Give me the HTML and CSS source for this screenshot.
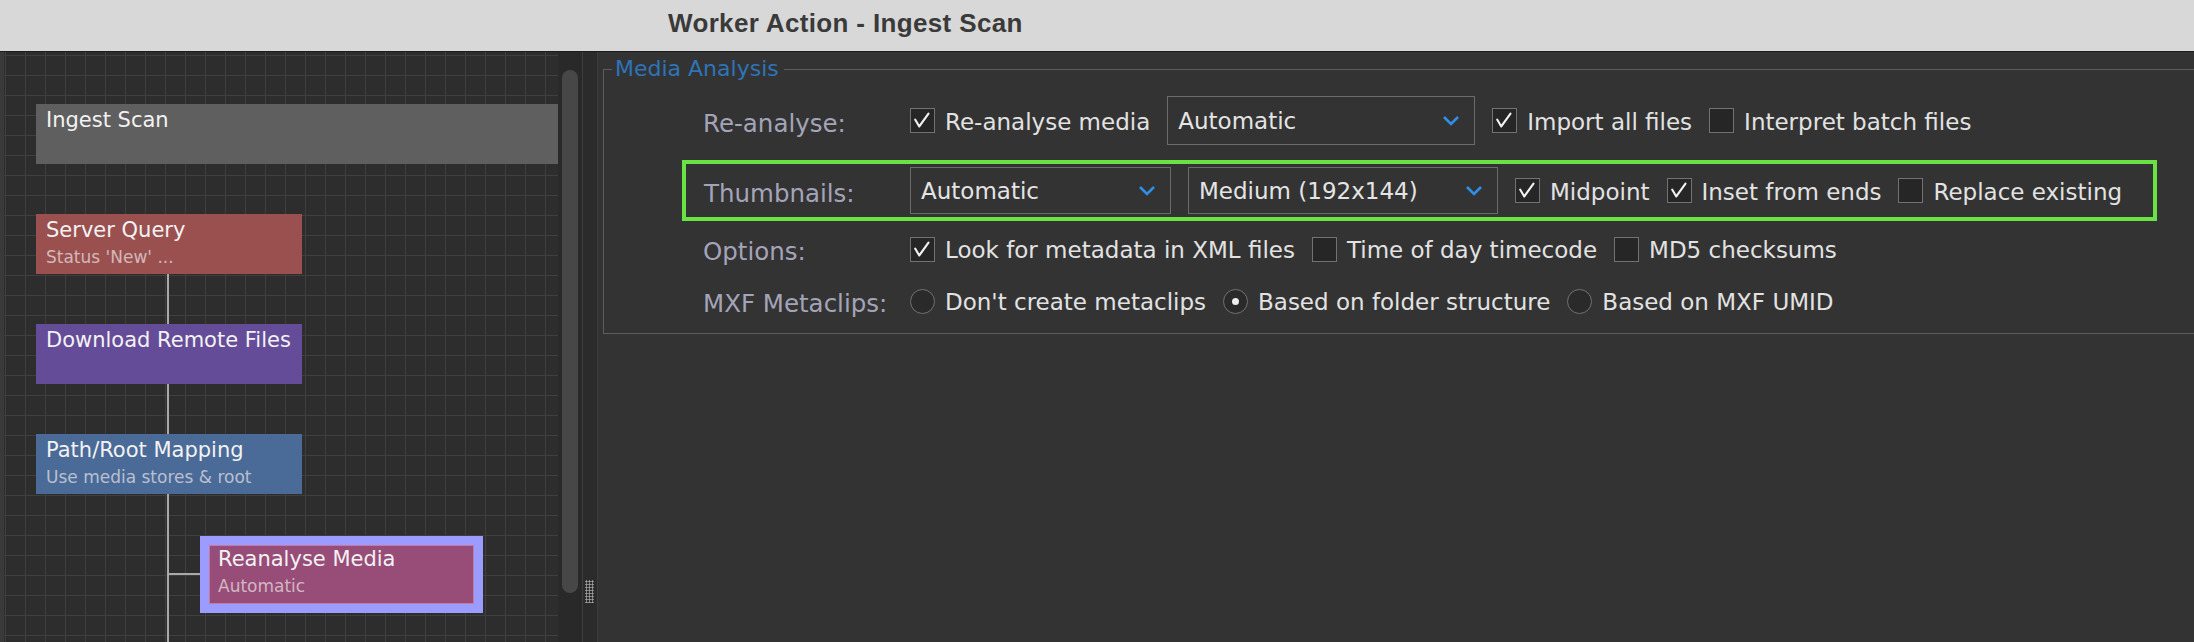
FILE: index.html
```html
<!DOCTYPE html>
<html lang="en">
<head>
  <meta charset="UTF-8">
  <title>Worker Action - Ingest Scan</title>
  <link rel="stylesheet" href="styles.css">
</head>
<body>
<div class="titlebar">Worker Action - Ingest Scan</div>

<div class="main">
  <!-- Workflow graph -->
  <div class="canvas">
    <div class="wire wire-v"></div>
    <div class="wire wire-h"></div>

    <div class="node n-ingest">Ingest Scan</div>
    <div class="node n-query">Server Query<div class="sub">Status 'New' ...</div></div>
    <div class="node n-download">Download Remote Files</div>
    <div class="node n-path">Path/Root Mapping<div class="sub">Use media stores &amp; root</div></div>
    <div class="selected">
      <div class="node-inner">Reanalyse Media<div class="sub">Automatic</div></div>
    </div>
  </div>

  <div class="scrollbar"><div class="thumb"></div></div>
  <div class="splitter"><div class="grip"></div></div>

  <!-- Settings -->
  <div class="panel">
    <fieldset class="group">
      <legend>Media Analysis</legend>

      <div class="row row-1">
        <span class="label">Re-analyse:</span>
        <span class="check"><span class="box"><svg width="25" height="25" viewBox="0 0 25 25"><path d="M4.5 11.5 L9 19 L19 5" /></svg></span><span>Re-analyse media</span></span>
        <div class="select w308"><span>Automatic</span><svg width="18" height="11" viewBox="0 0 18 11"><polyline points="2,2 9,9 16,2" /></svg></div>
        <span class="check"><span class="box"><svg width="25" height="25" viewBox="0 0 25 25"><path d="M4.5 11.5 L9 19 L19 5" /></svg></span><span>Import all files</span></span>
        <span class="check"><span class="box"></span><span>Interpret batch files</span></span>
      </div>

      <div class="row hl">
        <span class="label">Thumbnails:</span>
        <div class="select w261"><span>Automatic</span><svg width="18" height="11" viewBox="0 0 18 11"><polyline points="2,2 9,9 16,2" /></svg></div>
        <div class="select w310"><span>Medium (192x144)</span><svg width="18" height="11" viewBox="0 0 18 11"><polyline points="2,2 9,9 16,2" /></svg></div>
        <span class="check"><span class="box"><svg width="25" height="25" viewBox="0 0 25 25"><path d="M4.5 11.5 L9 19 L19 5" /></svg></span><span>Midpoint</span></span>
        <span class="check"><span class="box"><svg width="25" height="25" viewBox="0 0 25 25"><path d="M4.5 11.5 L9 19 L19 5" /></svg></span><span>Inset from ends</span></span>
        <span class="check"><span class="box"></span><span>Replace existing</span></span>
      </div>

      <div class="row row-3">
        <span class="label">Options:</span>
        <span class="check"><span class="box"><svg width="25" height="25" viewBox="0 0 25 25"><path d="M4.5 11.5 L9 19 L19 5" /></svg></span><span>Look for metadata in XML files</span></span>
        <span class="check"><span class="box"></span><span>Time of day timecode</span></span>
        <span class="check"><span class="box"></span><span>MD5 checksums</span></span>
      </div>

      <div class="row row-4">
        <span class="label">MXF Metaclips:</span>
        <span class="check"><span class="radio"></span><span>Don't create metaclips</span></span>
        <span class="check"><span class="radio on"></span><span>Based on folder structure</span></span>
        <span class="check"><span class="radio"></span><span>Based on MXF UMID</span></span>
      </div>
    </fieldset>
  </div>
</div>
</body>
</html>
```

FILE: styles.css
```css
/* Dark worker action dialog */
body {
  margin: 0;
  background: #333;
  font-family: "DejaVu Sans", Verdana, sans-serif;
  overflow: hidden;
}
.titlebar {
  height: 52px;
  box-sizing: border-box;
  border-bottom: 1px solid #1c1c1c;
  background: #d8d8d8;
  padding-left: 668px;
  font: bold 26px/46px "Liberation Sans", Arial, sans-serif;
  letter-spacing: 0.35px;
  color: #3a3a3a;
}
.main {
  display: flex;
  height: 590px;
}

/* graph canvas */
.canvas {
  position: relative;
  width: 554px;
  border-left: 4px solid #3a3a3a;
  overflow: hidden;
  background-color: #2d2d2d;
  background-image:
    linear-gradient(#3f3f3f 1px, transparent 1px),
    linear-gradient(90deg, #3f3f3f 1px, transparent 1px);
  background-size: 20px 20px;
  background-position: 1px 3px;
}
.wire {
  position: absolute;
  background: #a9a9a9;
}
.wire-v {
  left: 163px;
  top: 221px;
  width: 2px;
  height: 400px;
}
.wire-h {
  left: 163px;
  top: 521px;
  width: 35px;
  height: 2px;
}
.node {
  position: absolute;
  box-sizing: border-box;
  left: 32px;
  width: 266px;
  height: 60px;
  padding: 4px 10px 0;
  color: #f2f2f2;
  font-size: 21px;
  line-height: 25px;
  white-space: nowrap;
}
.sub {
  margin-top: 3px;
  font-size: 17px;
  line-height: 22px;
  color: rgba(235, 230, 230, 0.7);
}
.n-ingest {
  top: 52px;
  width: 540px;
  background: #5f5f5f;
}
.n-query {
  top: 162px;
  background: #9b5050;
}
.n-download {
  top: 272px;
  background: #654c99;
}
.n-path {
  top: 382px;
  background: #4a6a98;
}
.selected {
  position: absolute;
  left: 196px;
  top: 484px;
  width: 283px;
  height: 77px;
  box-sizing: border-box;
  border: 9px solid #9c9cff;
}
.node-inner {
  box-sizing: border-box;
  height: 100%;
  padding: 1px 8px 0;
  border: 1px solid #c27aa6;
  background: #984c78;
  color: #f2f2f2;
  font-size: 21px;
  line-height: 25px;
  white-space: nowrap;
}

/* scrollbar + splitter */
.scrollbar {
  width: 24px;
  background: #292929;
}
.thumb {
  margin: 18px 0 0 4px;
  width: 16px;
  height: 523px;
  border-radius: 8px;
  background: #474747;
}
.splitter {
  width: 14px;
  border-left: 1px solid #3d3d3d;
  border-right: 1px solid #3d3d3d;
  background: #2b2b2b;
}
.grip {
  margin: 528px 0 0 2px;
  width: 9px;
  height: 23px;
  background: radial-gradient(circle, #a0a0a0 0.9px, transparent 1.3px) 0 0 / 3px 3px;
}

/* settings panel */
.panel {
  flex: 1;
  background: #333;
}
.group {
  margin: 4px 0 0 5px;
  padding: 0 0 12px 0;
  border: 1px solid #5d5d5d;
  border-right: none;
  min-width: 0;
}
legend {
  margin-left: 8px;
  padding: 0 5px 0 3px;
  font-size: 22px;
  line-height: 26px;
  color: #2e74b8;
}
.row {
  display: flex;
  align-items: center;
  gap: 17px;
  margin-left: 99px;
  white-space: nowrap;
}
.label {
  width: 190px;
  padding-top: 5px;
  font-size: 24.5px;
  color: #a4a4b8;
}
.row-1 {
  margin-top: 14px;
  height: 49px;
}
.row.hl {
  margin-left: 78px;
  margin-top: 15px;
  width: 1475px;
  height: 61px;
  box-sizing: border-box;
  border: 4px solid #68e343;
  padding-left: 18px;
}
.hl .label {
  width: 189px;
}
.row-3 {
  margin-top: 8px;
  height: 40px;
}
.row-4 {
  margin-top: 12px;
  height: 40px;
}

.select {
  box-sizing: border-box;
  height: 49px;
  border: 1px solid #6b6b6b;
  display: flex;
  align-items: center;
  justify-content: space-between;
  padding: 0 14px 0 10px;
  color: #e4e4e4;
  font-size: 23px;
}
.hl .select {
  height: 47px;
}
.select polyline {
  fill: none;
  stroke: #2f8fe6;
  stroke-width: 2.6;
}
.w308 { width: 308px; }
.w261 { width: 261px; }
.w310 { width: 310px; }

.check {
  display: flex;
  align-items: center;
  gap: 10px;
  font-size: 23px;
  color: #e2e2e2;
}
.check > span:last-child {
  padding-top: 2px;
}
.box,
.radio {
  width: 25px;
  height: 25px;
  box-sizing: border-box;
  border: 1px solid #727272;
  background: #262626;
  display: flex;
  align-items: center;
  justify-content: center;
}
.box svg {
  display: block;
}
.box path {
  fill: none;
  stroke: #f2f2f2;
  stroke-width: 2.3;
  stroke-linecap: round;
  stroke-linejoin: round;
}
.radio {
  border-radius: 50%;
  background: #2a2a2a;
}
.radio.on::after {
  content: "";
  width: 7px;
  height: 7px;
  border-radius: 50%;
  background: #eee;
}
```
